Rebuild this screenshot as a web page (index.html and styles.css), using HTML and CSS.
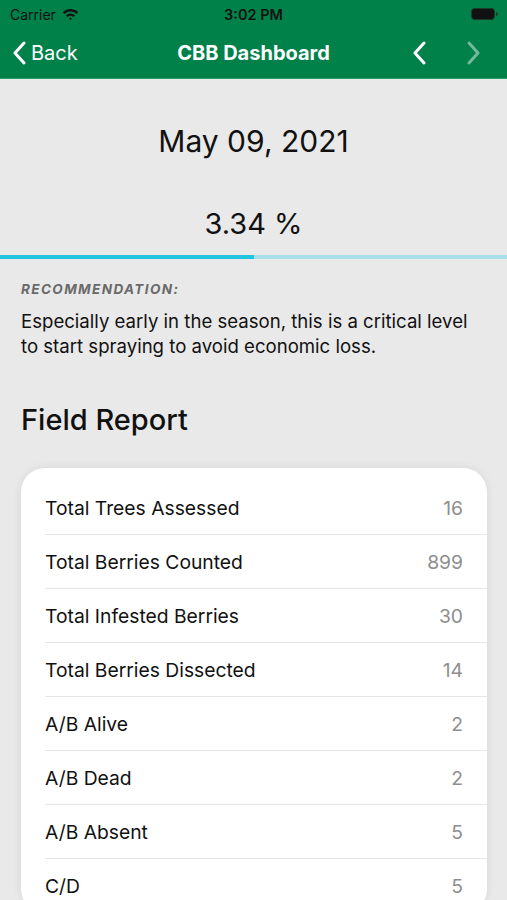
FILE: index.html
```html
<!DOCTYPE html>
<html>
<head>
<meta charset="utf-8">
<link rel="stylesheet" href="styles.css">
</head>
<body>
<header class="header">
  <div class="status">
    <div class="status-left">
      <span class="carrier">Carrier</span>
      <svg class="wifi" width="17" height="12" viewBox="0 0 17 12">
        <path d="M0.8 4.2 A11 11 0 0 1 16.2 4.2 L14.4 6 A8.5 8.5 0 0 0 2.6 6 Z" fill="#111"/>
        <path d="M3.9 7.3 A6.6 6.6 0 0 1 13.1 7.3 L11.3 9.1 A4 4 0 0 0 5.7 9.1 Z" fill="#111"/>
        <path d="M7 10.4 A2.2 2.2 0 0 1 10 10.4 L8.5 11.9 Z" fill="#111"/>
      </svg>
    </div>
    <span class="time">3:02 PM</span>
    <div class="status-right">
      <svg width="27" height="12" viewBox="0 0 27 12">
        <rect x="0.5" y="0.5" width="23" height="11" rx="3" fill="#111" stroke="#1a3d2a" stroke-width="1"/>
        <path d="M25 4 a1.5 1.5 0 0 1 0 4 Z" fill="#1a3d2a"/>
      </svg>
    </div>
  </div>
  <nav class="nav">
    <div class="back">
      <svg width="14" height="24" viewBox="0 0 14 24"><polyline points="12,2 3,12 12,22" fill="none" stroke="#fff" stroke-width="3" stroke-linecap="round" stroke-linejoin="round"/></svg>
      <span>Back</span>
    </div>
    <div class="title">CBB Dashboard</div>
    <div class="arrows">
      <svg width="14" height="24" viewBox="0 0 14 24"><polyline points="12,2 3,12 12,22" fill="none" stroke="#fff" stroke-width="3" stroke-linecap="round" stroke-linejoin="round"/></svg>
      <svg class="dim" width="14" height="24" viewBox="0 0 14 24"><polyline points="2,2 11,12 2,22" fill="none" stroke="#fff" stroke-width="3" stroke-linecap="round" stroke-linejoin="round"/></svg>
    </div>
  </nav>
</header>
<main class="content">
  <div class="date">May 09, 2021</div>
  <div class="percent">3.34 %</div>
  <div class="progress"><div class="progress-fill" style="width:50.1%"></div></div>
  <section class="rec">
    <div class="rec-label">RECOMMENDATION:</div>
    <p class="rec-text">Especially early in the season, this is a critical level to start spraying to avoid economic loss.</p>
  </section>
  <h2 class="section-title">Field Report</h2>
  <div class="card">
    <div class="row"><span>Total Trees Assessed</span><span class="val">16</span></div>
    <div class="row"><span>Total Berries Counted</span><span class="val">899</span></div>
    <div class="row"><span>Total Infested Berries</span><span class="val">30</span></div>
    <div class="row"><span>Total Berries Dissected</span><span class="val">14</span></div>
    <div class="row"><span>A/B Alive</span><span class="val">2</span></div>
    <div class="row"><span>A/B Dead</span><span class="val">2</span></div>
    <div class="row"><span>A/B Absent</span><span class="val">5</span></div>
    <div class="row"><span>C/D</span><span class="val">5</span></div>
  </div>
</main>
</body>
</html>
```

FILE: styles.css
```css
* { box-sizing: border-box; }
html, body { margin: 0; padding: 0; }
body {
  background: #e9e9e9;
  font-family: Inter, "Liberation Sans", sans-serif;
  color: #111;
  width: 507px;
  height: 900px;
  overflow: hidden;
}
.header {
  background: #00814a;
  height: 79px;
  border-bottom: 1px solid #2f9d66;
}
.status {
  height: 28px;
  display: flex;
  align-items: center;
  justify-content: space-between;
  padding: 0 9px 0 10px;
  position: relative;
}
.status-left { display: flex; align-items: center; gap: 6px; }
.carrier { font-size: 14px; color: #111; }
.time {
  position: absolute;
  left: 0; right: 0;
  text-align: center;
  font-size: 14.5px;
  font-weight: 600;
  color: #111;
  pointer-events: none;
}
.status-right { display: flex; align-items: center; }
.nav {
  height: 50px;
  display: flex;
  align-items: center;
  justify-content: space-between;
  padding: 0 26px 0 12px;
  position: relative;
}
.back { display: flex; align-items: center; gap: 5px; color: #fff; font-size: 20px; }
.back svg { display: block; }
.title {
  position: absolute;
  left: 0; right: 0;
  text-align: center;
  color: #fff;
  font-size: 20px;
  font-weight: 700;
}
.arrows { display: flex; gap: 41px; align-items: center; }
.arrows svg { display: block; }
.dim { opacity: 0.45; }
.date {
  text-align: center;
  font-size: 30px;
  margin-top: 42px;
  line-height: 40px;
}
.percent {
  text-align: center;
  font-size: 29px;
  margin-top: 44px;
  line-height: 38px;
}
.progress {
  margin-top: 12px;
  height: 4px;
  background: #a8dfe9;
}
.progress-fill { height: 100%; background: #22c4e0; }
.rec { padding: 0 21px; }
.rec-label {
  margin-top: 22px;
  font-size: 13.5px;
  font-weight: 700;
  font-style: italic;
  color: #6a6a6a;
  letter-spacing: 1.4px;
  line-height: 16px;
}
.rec-text {
  margin: 12px 0 0;
  font-size: 18.6px;
  line-height: 25px;
}
.section-title {
  margin: 43px 21px 0;
  font-size: 29px;
  font-weight: 500;
  line-height: 36px;
}
.card {
  margin: 30px 20px 0 21px;
  background: #fff;
  border-radius: 24px;
  padding: 13px 0 0 24px;
  box-shadow: 0 0 10px rgba(0,0,0,0.08);
}
.row {
  height: 54px;
  display: flex;
  align-items: center;
  justify-content: space-between;
  padding-right: 24px;
  font-size: 19.3px;
  border-bottom: 1px solid #e6e6e6;
}
.val { color: #8e8e8e; }
```
